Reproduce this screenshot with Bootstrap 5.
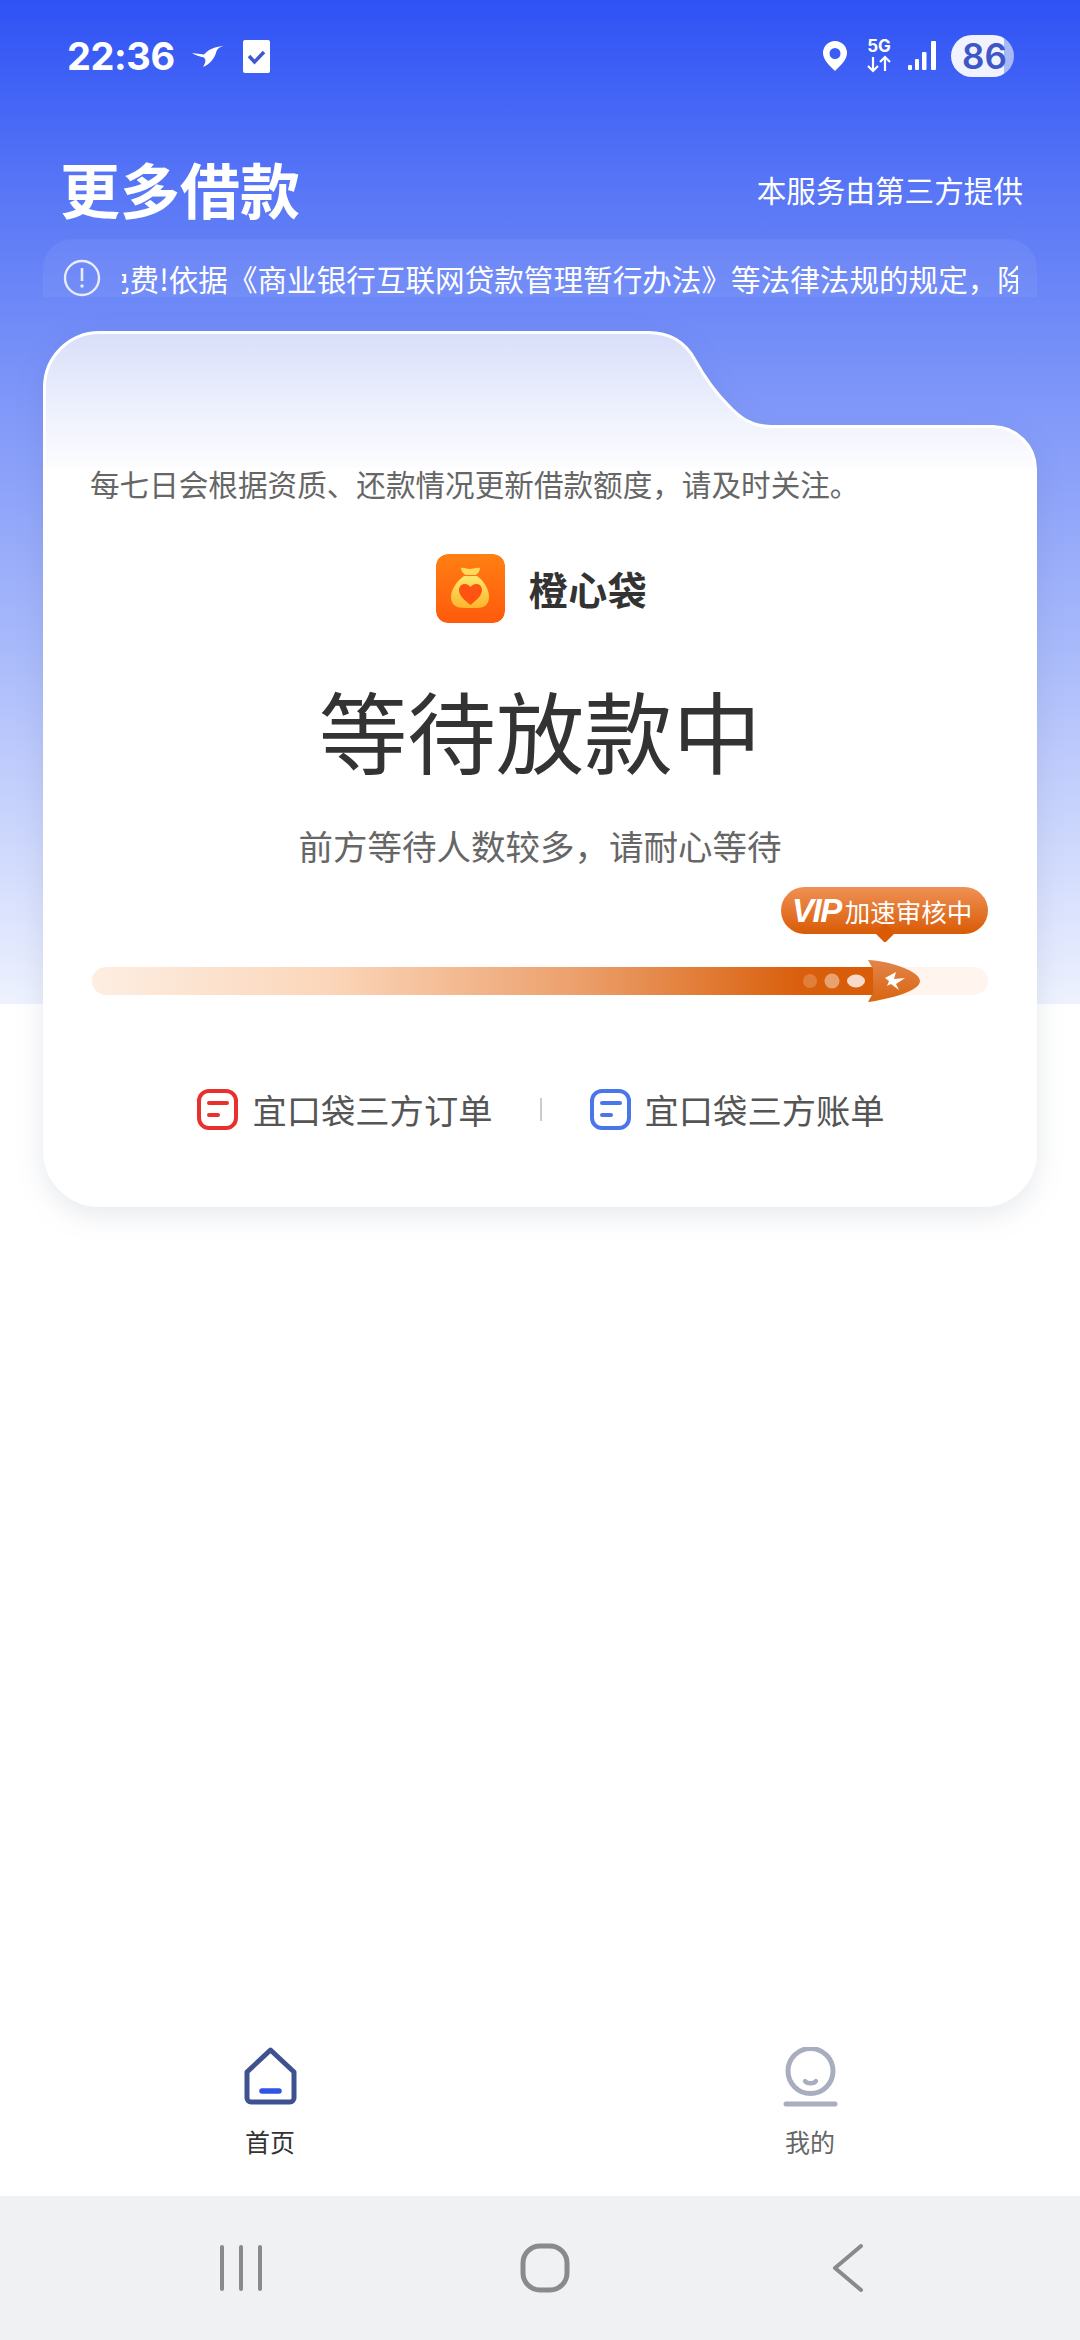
<!DOCTYPE html>
<html lang="zh-CN">
<head>
<meta charset="utf-8">
<title>更多借款</title>
<link rel="stylesheet" href="https://cdn.jsdelivr.net/npm/bootstrap@5.3.0/dist/css/bootstrap.min.css">
<style>
html,body{margin:0;height:2340px;background:#fff}
body{font-family:"Noto Sans CJK SC","Noto Sans",sans-serif;color:#333}
.screen{width:1080px;height:2340px;overflow:hidden;background:linear-gradient(180deg,#2e52f5 0,#5a78f6 200px,#7f97f9 400px,#a9baFb 650px,#d5defd 880px,#eef2fe 1004px) no-repeat;background-size:100% 1004px}
.statusbar{height:110px;padding:34px 66px 0 67px;color:#fff}
.clock{font-family:Inter,Roboto,sans-serif;font-weight:700;font-size:38px;line-height:44px;letter-spacing:-.4px;width:125px}
.bird{margin-right:18px}
.batt{width:63px;height:42px;border-radius:21px;background:linear-gradient(90deg,#f0f3fe 0,#f0f3fe 84%,#a9b9f5 84%);color:#3d57c9;font-family:Inter,Roboto,sans-serif;font-weight:600;font-size:35px;line-height:42px;padding-left:11px}
.pin-ic{margin-right:19px}
.sig-ic{margin-left:16px;margin-right:13px}
.headrow{height:129px;padding:0 57px 0 60px;color:#fff}
.page-title{font-size:60px;font-weight:700;line-height:70px;margin:0 0 16px}
.provider{font-size:29.6px;line-height:40px;margin-bottom:29px}
.notice{margin:0 43px;height:58px;background:rgba(255,255,255,.06);border-radius:30px 30px 0 0;padding:20px 19px 0 20px;color:#fff;gap:21px}
.notice-clip{overflow:hidden;flex:1;white-space:nowrap;font-size:29.6px;line-height:40px;height:37px}
.notice-clip span{display:inline-block;margin-left:-22px}
.folder{position:relative;width:994px;height:876px;margin:34px 0 0 43px;padding:133px 48px 74px 48px}
.folder-bg{position:absolute;left:0;top:0;z-index:0;overflow:visible;filter:drop-shadow(0 8px 14px rgba(60,70,110,.12))}
.folder-in{position:relative;z-index:1}
.tip{font-size:29.6px;color:#666;line-height:40px;white-space:nowrap;margin-left:-1px}
.brand-row{margin-top:49px;height:70px;gap:24px;padding-left:3px}
.brand-name{font-size:39px;font-weight:700;color:#333;line-height:70px;letter-spacing:.5px}
.brand-logo{border-radius:12px;display:block}
.big-status{font-size:88.500px;font-weight:400;line-height:100px;color:#333;margin:55px 0 0;text-align:center}
.sub-status{font-size:34.500px;line-height:44px;color:#666;margin-top:45px;text-align:center}
.vip-tag{position:relative;margin:20px 1px 0 auto;width:207px;height:47px;border-radius:24px;background:linear-gradient(180deg,#ef9155,#d95b06);color:#fff;font-size:25.500px;line-height:47px;padding-left:11px;white-space:nowrap}
.vip-tag::after{content:"";position:absolute;left:97px;bottom:-6px;width:14px;height:14px;background:#d95b06;transform:rotate(45deg);border-radius:2px}
.vip-tag b{font-family:"Liberation Sans",sans-serif;font-style:italic;font-weight:700;font-size:33px;letter-spacing:-1.500px;margin-right:4px}
.rail{position:relative;margin:33px 1px 0 1px;height:28px}
.rail .progress{height:28px;background:#fff5ee;border-radius:14px}
.rail .progress-bar{background:linear-gradient(90deg,#fdeee2 0,#fbd6ba 30%,#ec9f6b 62%,#d95f0c 90%,#d95b06 100%);border-radius:14px 0 0 14px}
.rocket{position:absolute;left:776px;top:-7px;overflow:visible}
.dots{left:706px}
.links{margin-top:93px;height:42px;padding-left:2px}
.blink{font-size:34.300px;line-height:42px;color:#555;gap:14px;white-space:nowrap;text-decoration:none}
.vsep{width:2px;height:23px;background:#ccc;margin:0 48px 0 47px}
.tabs{height:149px}
.tabitem{font-size:25px;line-height:30px;color:#333}
.tabitem.off{color:#666}
.tabitem span{margin-top:21px}
.tabitem.off span{margin-top:19px}
.sysnav{height:144px;background:#f0f1f3;padding:0 216px 0 219px}
.homekey{margin-right:6px}
</style>
</head>
<body>
<div class="screen d-flex flex-column">
  <div class="statusbar d-flex justify-content-between align-items-start">
    <div class="d-flex align-items-center">
      <div class="clock">22:36</div>
      <svg class="bird" width="33" height="22" viewBox="0 0 33 22"><path d="M0 8 L12 9.500 C16 5 21 2 33 0.500 C27 2 25 4 24 8 C22 14 17 20 11 22 C14 17 14 15 12 12.500 C8 11.500 3 10 0 8Z" fill="#fff"/></svg>
      <svg width="27" height="33" viewBox="0 0 27 33"><rect width="27" height="33" rx="2" fill="#fff"/><path d="M6 16l5.500 6L21 12" fill="none" stroke="#3f58d0" stroke-width="3.500"/></svg>
    </div>
    <div class="d-flex align-items-center" style="height:44px">
      <svg class="pin-ic" width="24" height="30" viewBox="0 0 24 30"><path fill-rule="evenodd" d="M12 0a12 12 0 0 1 12 12c0 7-7 13-12 18C7 25 0 19 0 12A12 12 0 0 1 12 0zm0 7a5.500 5.500 0 1 0 0 11 5.500 5.500 0 0 0 0-11z" fill="#fff"/></svg>
      <svg width="26" height="34" viewBox="0 0 26 34" style="overflow:visible"><text x="13" y="13" text-anchor="middle" font-family="Inter,Roboto,sans-serif" font-weight="700" font-size="17" fill="#fff">5G</text><path d="M7 18v14M2 27l5 5 5-5M19 32V18M14 23l5-5 5 5" fill="none" stroke="#fff" stroke-width="2.200"/></svg>
      <svg class="sig-ic" width="30" height="30" viewBox="0 0 30 30"><g fill="#fff"><rect x="0" y="24" width="4" height="5" rx="1"/><rect x="7" y="18" width="4" height="11" rx="1"/><rect x="14" y="11" width="4.500" height="18" rx="1"/><rect x="23" y="0" width="5" height="29" rx="1"/></g></svg>
      <div class="batt">86</div>
    </div>
  </div>

  <div class="headrow d-flex justify-content-between align-items-end">
    <h1 class="page-title">更多借款</h1>
    <div class="provider">本服务由第三方提供</div>
  </div>

  <div class="notice d-flex">
    <svg width="38" height="38" viewBox="0 0 38 38" class="flex-shrink-0"><circle cx="19" cy="19" r="17" fill="none" stroke="#e8ecfe" stroke-width="2.400"/><path d="M19 9v13" stroke="#e8ecfe" stroke-width="2.600"/><circle cx="19" cy="27" r="1.700" fill="#e8ecfe"/></svg>
    <div class="notice-clip"><span>免费!依据《商业银行互联网贷款管理暂行办法》等法律法规的规定，除</span></div>
  </div>

  <div class="folder">
    <svg class="folder-bg" width="994" height="876" viewBox="0 0 994 876">
      <defs><linearGradient id="fg" x1="0" y1="0" x2="0" y2="1" gradientUnits="objectBoundingBox"><stop offset="0" stop-color="#d9dffa"/><stop offset=".155" stop-color="#fdfdff"/><stop offset=".156" stop-color="#fff"/></linearGradient></defs>
      <path d="M1.500 57 A55 55 0 0 1 57 1.500 H605 C630 1.500 644 14 652 29 C662 47 672 61 685 74 C697 87 709 95.500 728 95.500 H950 A43 43 0 0 1 992.500 138 V822 A53 53 0 0 1 939 874.500 H57 A55 55 0 0 1 1.500 820Z" fill="url(#fg)" stroke="#fff" stroke-width="3"/>
    </svg>
    <div class="folder-in">
      <div class="tip">每七日会根据资质、还款情况更新借款额度，请及时关注。</div>
      <div class="brand-row d-flex justify-content-center align-items-center">
        <svg class="brand-logo" width="69" height="69" viewBox="0 0 69 69">
          <defs><linearGradient id="lg" x1="0" y1="0" x2="0" y2="1"><stop offset="0" stop-color="#ff7f12"/><stop offset="1" stop-color="#ff5a0c"/></linearGradient><linearGradient id="bg2" x1="0" y1="0" x2="0" y2="1"><stop offset="0" stop-color="#ffe76b"/><stop offset="1" stop-color="#fdb52c"/></linearGradient></defs>
          <rect width="69" height="69" rx="12" fill="url(#lg)"/>
          <path d="M25 14c3-1 6 1 9 1s6-2 10-1c0 3-2 5-4 7H29c-1-2-4-3-4-7z" fill="#ffd95a"/>
          <path d="M28 22h13c7 5 12 13 12 21 0 8-5 11-13 11H29c-9 0-14-3-14-11 0-8 6-16 13-21z" fill="url(#bg2)"/>
          <path d="M34.500 51C27 45 23 41 23 36c0-7 8-8 11.500-3C38 28 46 29 46 36c0 5-4 9-11.500 15z" fill="#ff5311"/>
        </svg>
        <div class="brand-name">橙心袋</div>
      </div>
      <h2 class="big-status">等待放款中</h2>
      <div class="sub-status">前方等待人数较多，请耐心等待</div>
      <div class="vip-tag"><b>VIP</b>加速审核中</div>
      <div class="rail">
        <div class="progress"><div class="progress-bar" style="width:88%"></div></div>
        <svg class="rocket dots" width="70" height="42" viewBox="0 0 70 42">
          <circle cx="12" cy="21" r="7" fill="#fff" opacity=".2"/>
          <circle cx="34" cy="21" r="7.500" fill="#fff" opacity=".42"/>
          <ellipse cx="58" cy="21" rx="9" ry="6.500" fill="#fff" opacity=".78"/>
        </svg>
        <svg class="rocket" width="56" height="42" viewBox="0 0 56 42">
          <defs><linearGradient id="rk" x1="0" y1="0" x2="0" y2="1"><stop offset="0" stop-color="#e2854a"/><stop offset="1" stop-color="#d96510"/></linearGradient></defs>
          <path d="M0 0 C22 1 52 11 52 21 C52 31 22 39 0 42 L5 33 V9Z" fill="url(#rk)"/>
          <path d="M17 18l11-6-2 7 11-1-9 6 3 6-8-6-4 2 2-5z" fill="#fff"/>
        </svg>
      </div>
      <div class="links d-flex justify-content-center align-items-center">
        <a class="blink d-flex align-items-center" href="#">
          <svg width="41" height="41" viewBox="0 0 41 41"><rect x="2" y="2" width="37" height="37" rx="10" fill="none" stroke="#e8302f" stroke-width="4"/><path d="M12 14h18M12 26h9" stroke="#e8302f" stroke-width="4" stroke-linecap="round"/></svg>
          宜口袋三方订单</a>
        <div class="vsep"></div>
        <a class="blink d-flex align-items-center" href="#">
          <svg width="41" height="41" viewBox="0 0 41 41"><rect x="2" y="2" width="37" height="37" rx="10" fill="none" stroke="#4a76ea" stroke-width="4"/><path d="M12 14h18M12 26h9" stroke="#4a76ea" stroke-width="4" stroke-linecap="round"/></svg>
          宜口袋三方账单</a>
      </div>
    </div>
  </div>

  <div class="tabs row g-0 mt-auto">
    <div class="col-6 tabitem d-flex flex-column align-items-center">
      <svg width="53" height="58" viewBox="0 0 53 58"><path d="M26.500 3L50 25v26a4 4 0 0 1-4 4H7a4 4 0 0 1-4-4V25z" fill="none" stroke="#3f5290" stroke-width="5" stroke-linejoin="round"/><path d="M18 44h17" stroke="#2f55e5" stroke-width="5.500" stroke-linecap="round"/></svg>
      <span>首页</span>
    </div>
    <div class="col-6 tabitem off d-flex flex-column align-items-center">
      <svg width="55" height="60" viewBox="0 0 55 60"><ellipse cx="27.500" cy="24" rx="22.500" ry="22.500" fill="none" stroke="#a9adc0" stroke-width="5"/><path d="M22 34c2 3 9 3 11 0" fill="none" stroke="#a9adc0" stroke-width="4.500" stroke-linecap="round"/><path d="M3 57h49" stroke="#a9adc0" stroke-width="5" stroke-linecap="round"/></svg>
      <span>我的</span>
    </div>
  </div>

  <div class="sysnav d-flex justify-content-between align-items-center">
    <svg width="44" height="46" viewBox="0 0 44 46"><path d="M3 2v42M22 2v42M41 2v42" stroke="#8a8a8c" stroke-width="4" stroke-linecap="round"/></svg>
    <svg class="homekey" width="50" height="50" viewBox="0 0 50 50"><rect x="3" y="3" width="44" height="44" rx="17" fill="none" stroke="#8a8a8c" stroke-width="5"/></svg>
    <svg width="32" height="50" viewBox="0 0 32 50"><path d="M29 3L3 25l26 22" fill="none" stroke="#8a8a8c" stroke-width="4" stroke-linecap="round" stroke-linejoin="round"/></svg>
  </div>
</div>
<script src="https://cdn.jsdelivr.net/npm/bootstrap@5.3.0/dist/js/bootstrap.bundle.min.js"></script>
</body>
</html>
